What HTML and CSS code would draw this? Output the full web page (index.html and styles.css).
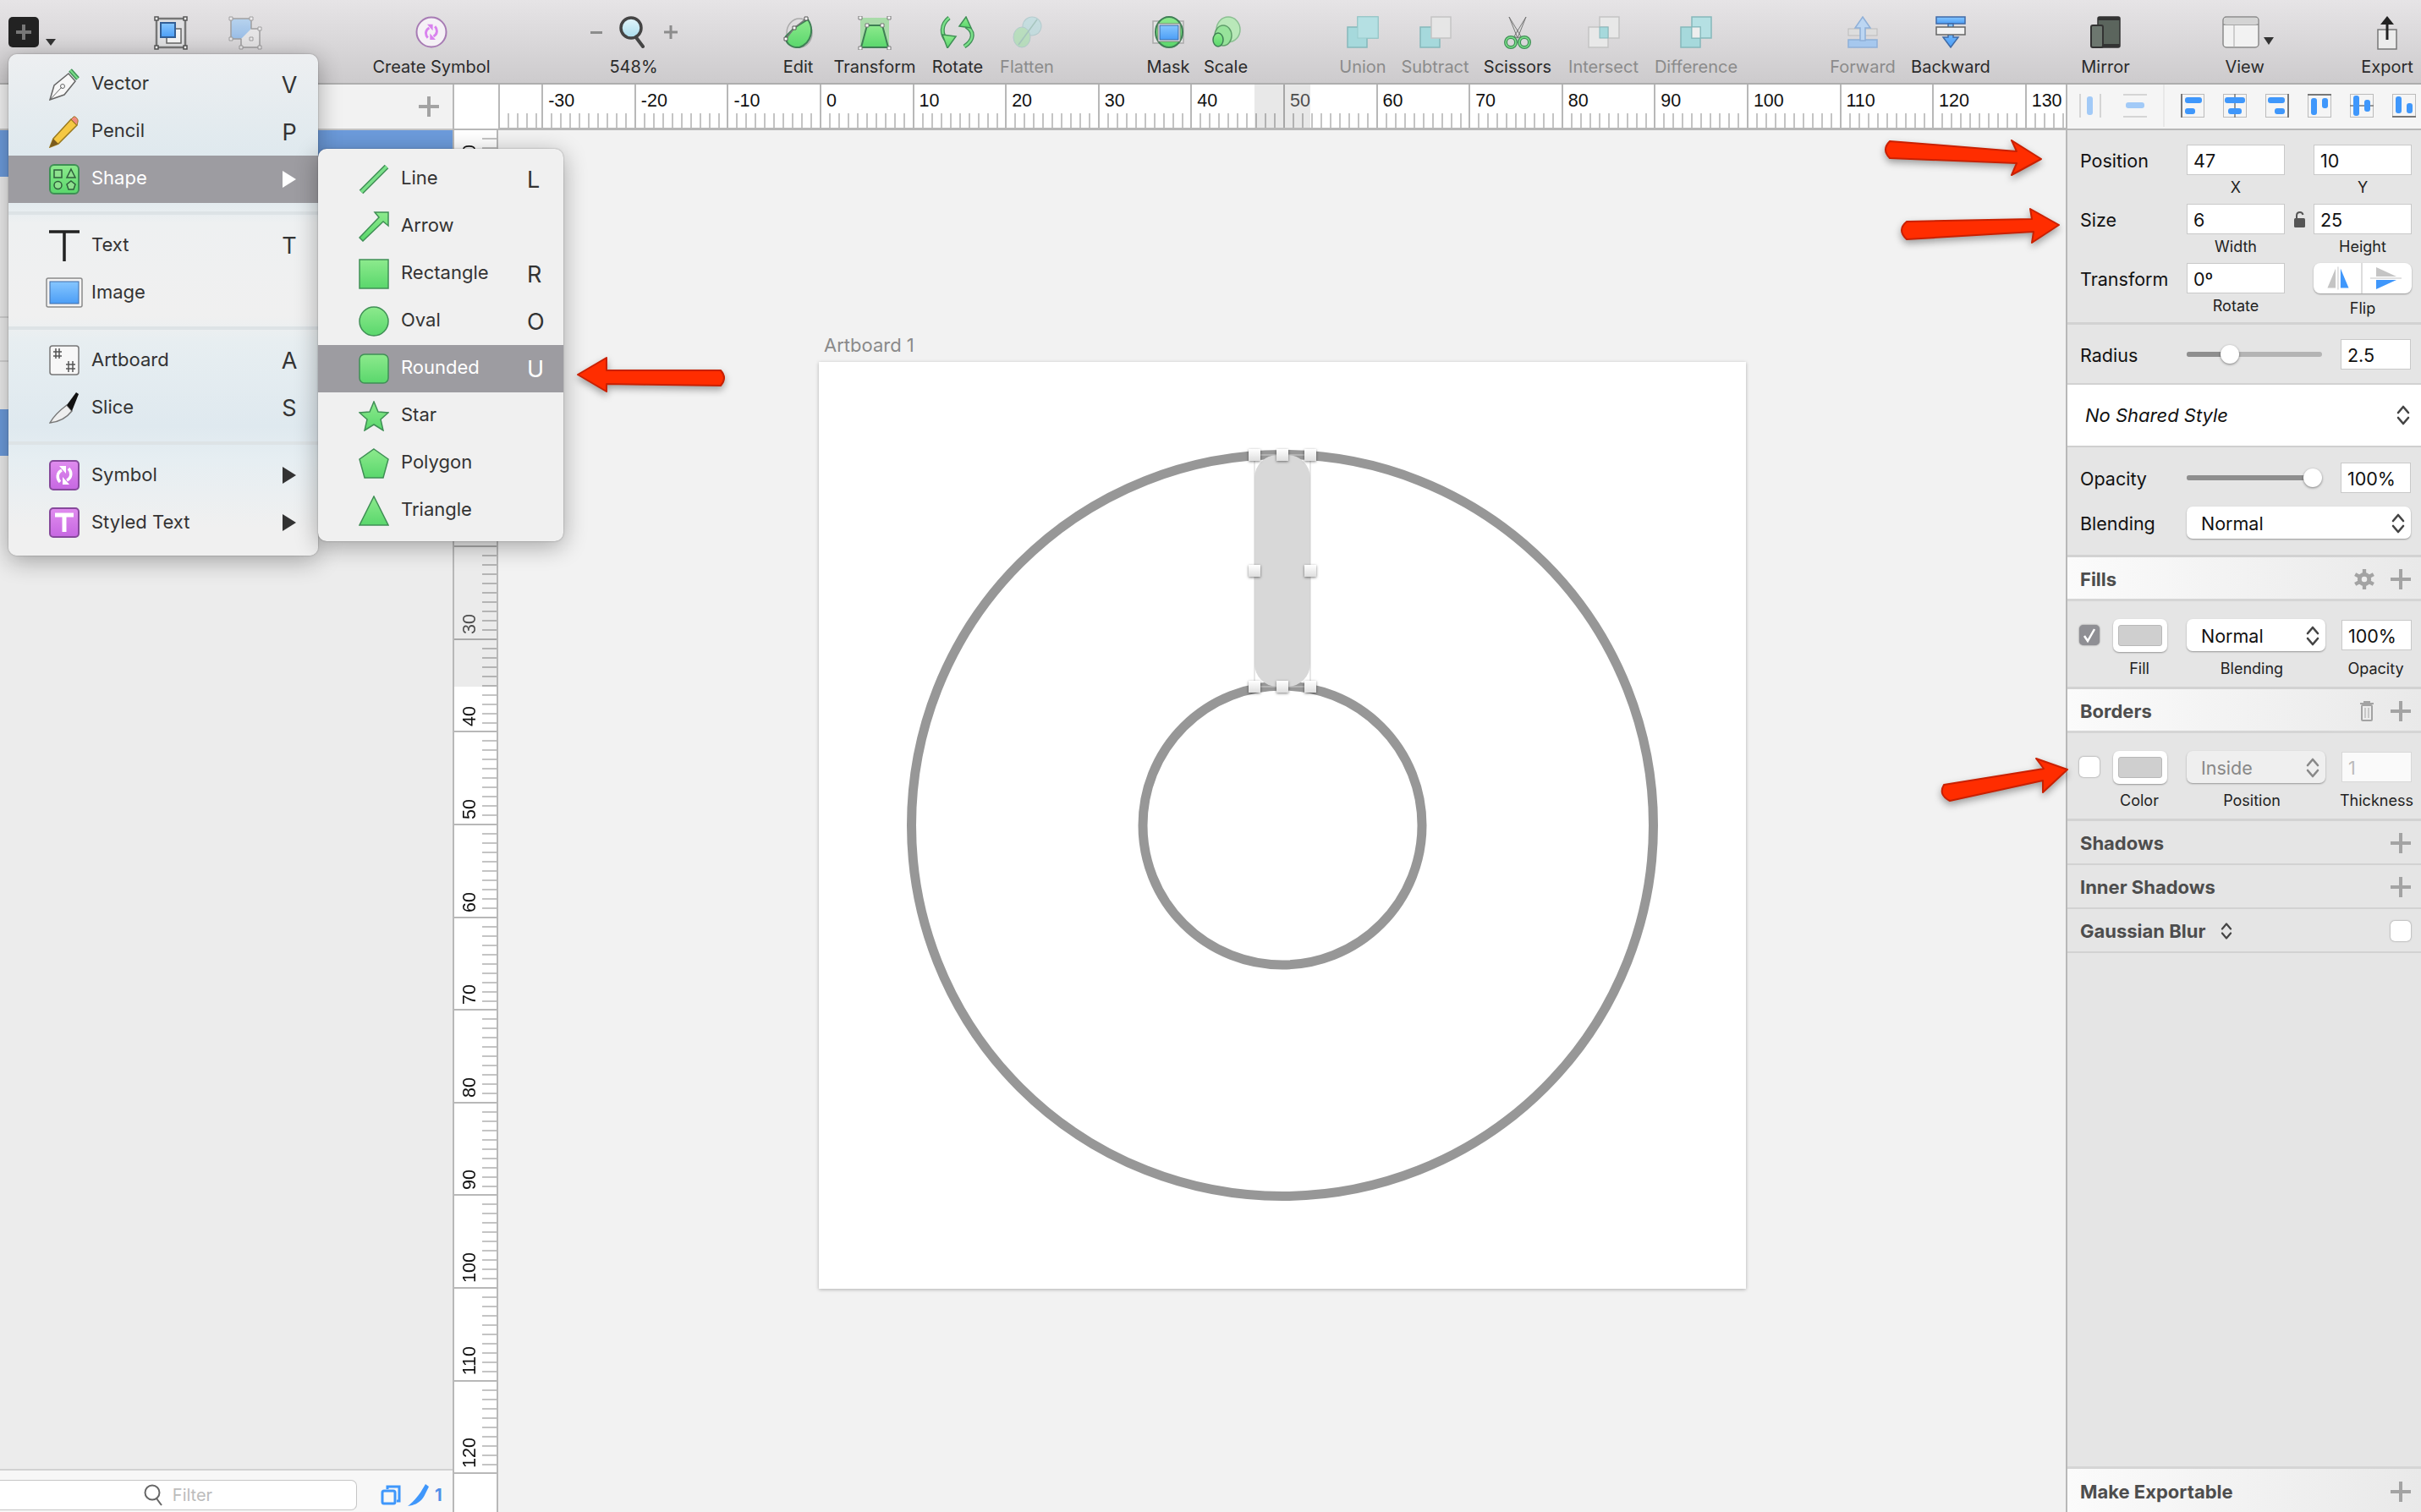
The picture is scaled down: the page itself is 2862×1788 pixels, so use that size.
FILE: index.html
```html
<!DOCTYPE html>
<html lang="en">
<head>
    <meta charset="UTF-8">
    <title>Sketch</title>
    <link rel="stylesheet" href="styles.css">
</head>
<body>
<svg class="defs" aria-hidden="true">
    <defs>
        <linearGradient id="gG" x1="0" y1="0" x2="0" y2="1"><stop offset="0" stop-color="#8dea8d"/><stop offset="1" stop-color="#5ad76c"/></linearGradient>
        <linearGradient id="gB" x1="0" y1="0" x2="0" y2="1"><stop offset="0" stop-color="#86c6ff"/><stop offset="1" stop-color="#4c9ef6"/></linearGradient>
        <linearGradient id="gP" x1="0" y1="0" x2="0" y2="1"><stop offset="0" stop-color="#e08cef"/><stop offset="1" stop-color="#c667e1"/></linearGradient>
        <linearGradient id="gL" x1="0" y1="0" x2="0" y2="1"><stop offset="0" stop-color="#e4f6fb"/><stop offset="1" stop-color="#a9dcec"/></linearGradient>
        <symbol id="updown" viewBox="0 0 16 26"><path d="M2 10 L8 3 L14 10 M2 16 L8 23 L14 16" fill="none" stroke="#444" stroke-width="2.6" stroke-linecap="round" stroke-linejoin="round"/></symbol>
        <symbol id="plus" viewBox="0 0 24 24"><path d="M12 0V24M0 12H24" stroke="#a3a3a3" stroke-width="4" stroke-linecap="round"/></symbol>
        <symbol id="tri" viewBox="0 0 16 20"><path d="M0 0L16 10L0 20Z"/></symbol>
        <symbol id="refresh" viewBox="0 0 24 24"><path d="M9 6C3 9 3 16 7 20M15 18C21 15 21 8 17 4" fill="none" stroke-width="3.500"/><path d="M6 1L14 1L14 10ZM18 23L10 23L10 14Z" stroke="none"/></symbol>
    </defs>
</svg>

<div class="app">
    <header class="toolbar">
        <div class="tool tool-insert">
            <div class="insert-btn"><svg width="20" height="20" viewBox="0 0 20 20"><path d="M10 1V19M1 10H19" stroke="#777" stroke-width="4"/></svg></div>
            <svg class="insert-caret" width="12" height="8" viewBox="0 0 12 8"><path d="M0 0H12L6 8Z" fill="#333"/></svg>
        </div>
        <div class="tool">
            <svg class="ico" width="40" height="40" viewBox="0 0 40 40"><rect x="3" y="3" width="34" height="34" fill="#e0e0e2" stroke="#777" stroke-width="2.500"/><rect x="15" y="15" width="17" height="17" fill="#f4f4f4" stroke="#666" stroke-width="1.500"/><rect x="8" y="8" width="17" height="17" fill="url(#gB)" stroke="#335f96" stroke-width="2"/><path d="M1 1h4v4h-4zM35 1h4v4h-4zM1 35h4v4h-4zM35 35h4v4h-4z" fill="#fff" stroke="#555" stroke-width="1.500"/></svg>
        </div>
        <div class="tool">
            <svg class="ico off" width="40" height="40" viewBox="0 0 40 40"><rect x="3" y="3" width="24" height="24" fill="url(#gB)" stroke="#555" stroke-width="1.500"/><path d="M27 15H37V37H15V27" fill="#f2f2f2" stroke="#555" stroke-width="1.500"/><path d="M1 1h4v4h-4zM25 1h4v4h-4zM1 25h4v4h-4zM25 25h4v4h-4zM35 13h4v4h-4zM13 35h4v4h-4zM35 35h4v4h-4z" fill="#fff" stroke="#555"/></svg>
        </div>
        <div class="tool">
            <svg class="ico" width="38" height="38" viewBox="0 0 38 38"><circle cx="19" cy="19" r="17.5" fill="#f5f1f6" stroke="#a77bb4" stroke-width="2"/><g transform="translate(9 9) scale(.83)" fill="#d982ee" stroke="#d982ee"><use href="#refresh" width="24" height="24"/></g></svg>
            <span class="tool-label">Create Symbol</span>
        </div>
        <div class="tool">
            <div class="zoom-row">
                <span class="zoom-minus"></span>
                <svg width="30" height="38" viewBox="0 0 30 38"><path d="M19 24L28 36" stroke="#444" stroke-width="4" stroke-linecap="round"/><circle cx="14" cy="14" r="12" fill="url(#gL)" stroke="#444" stroke-width="3.5"/></svg>
                <svg class="zoom-plus" width="16" height="16" viewBox="0 0 16 16"><path d="M8 0V16M0 8H16" stroke="#8c8c8c" stroke-width="3"/></svg>
            </div>
            <span class="tool-label">548%</span>
        </div>
        <div class="tool-gap"></div>
        <div class="tool">
            <svg class="ico" width="38" height="38" viewBox="0 0 38 38"><ellipse cx="20" cy="20" rx="15" ry="17" fill="none" stroke="#aaa" stroke-width="1.5"/><path d="M30 4 C38 16 34 32 20 37 C8 38 3 30 4 24 L14 14 Z" fill="url(#gG)" stroke="#3f7f55" stroke-width="2"/><path d="M4 27L14 14L28 3" fill="none" stroke="#777" stroke-width="1.5"/><path d="M2 25h4v4h-4zM12 12h4v4h-4zM26 1h4v4h-4z" fill="#fff" stroke="#555"/></svg>
            <span class="tool-label">Edit</span>
        </div>
        <div class="tool">
            <svg class="ico" width="40" height="40" viewBox="0 0 40 40"><rect x="3" y="2" width="34" height="36" fill="#a9dba9"/><path d="M11 11H29L36 37H4Z" fill="url(#gG)" stroke="#3f7f55" stroke-width="2"/><path d="M1 0h4v4h-4zM35 0h4v4h-4zM1 36h4v4h-4zM35 36h4v4h-4zM9 9h4v4h-4zM27 9h4v4h-4z" fill="#fff" stroke="#777"/></svg>
            <span class="tool-label">Transform</span>
        </div>
        <div class="tool">
            <svg class="ico" width="44" height="38" viewBox="0 0 44 38"><path d="M12 2 C2 10 2 22 10 30" fill="none" stroke="#3f8f55" stroke-width="5"/><path d="M12 2 C2 10 2 22 10 30" fill="none" stroke="#7be08a" stroke-width="2.5"/><path d="M4 22L20 24L10 38Z" fill="url(#gG)" stroke="#3f8f55" stroke-width="1.5"/><path d="M32 12 C42 18 42 28 30 36" fill="none" stroke="#3f8f55" stroke-width="5"/><path d="M32 12 C42 18 42 28 30 36" fill="none" stroke="#7be08a" stroke-width="2.5"/><path d="M24 12L38 14L32 1Z" fill="url(#gG)" stroke="#3f8f55" stroke-width="1.5"/></svg>
            <span class="tool-label">Rotate</span>
        </div>
        <div class="tool off-tool">
            <svg class="ico off" width="36" height="38" viewBox="0 0 36 38"><ellipse cx="24" cy="12" rx="11" ry="11" fill="#a6dde0" stroke="#7fb5b8" transform="rotate(25 24 12)"/><ellipse cx="12" cy="25" rx="10" ry="12" fill="#8fe29a" stroke="#7fb5b8"/><path d="M8 34L30 4" stroke="#6a9" stroke-width="1.5"/></svg>
            <span class="tool-label">Flatten</span>
        </div>
        <div class="tool-gap"></div>
        <div class="tool">
            <svg class="ico" width="40" height="38" viewBox="0 0 40 38"><rect x="2" y="6" width="36" height="26" fill="#e3e3e3" stroke="#aaa" stroke-width="1.5"/><ellipse cx="21" cy="19" rx="16" ry="18" fill="url(#gG)" stroke="#3f7f55" stroke-width="2"/><rect x="8" y="9" width="26" height="21" fill="#fff" stroke="#777"/><rect x="10" y="11" width="22" height="17" fill="url(#gB)" stroke="#36609a"/></svg>
            <span class="tool-label">Mask</span>
        </div>
        <div class="tool">
            <svg class="ico" width="36" height="38" viewBox="0 0 36 38"><ellipse cx="21" cy="16" rx="14" ry="15" fill="#b9e8b9" stroke="#8bbf92" stroke-width="1.5"/><ellipse cx="15" cy="23" rx="10" ry="12" fill="#97e39b" stroke="#5f9f6a" stroke-width="1.5"/><ellipse cx="9" cy="28" rx="6" ry="8" fill="url(#gG)" stroke="#3f7f55" stroke-width="1.5"/></svg>
            <span class="tool-label">Scale</span>
        </div>
        <div class="tool-gap"></div>
        <div class="tool off-tool">
            <svg class="ico" width="38" height="38" viewBox="0 0 38 38"><path d="M13 1H37V26H24V37H1V13H13Z" fill="#a6d9dc" stroke="#85b8bb" stroke-width="1.5"/><rect x="13" y="1" width="24" height="25" fill="#b5e0e3" stroke="#9cc" /></svg>
            <span class="tool-label">Union</span>
        </div>
        <div class="tool off-tool">
            <svg class="ico" width="38" height="38" viewBox="0 0 38 38"><rect x="1" y="13" width="23" height="24" fill="#a6d9dc" stroke="#85b8bb" stroke-width="1.5"/><rect x="14" y="1" width="23" height="25" fill="#e6e6e6" stroke="#c4c4c4" stroke-width="1.5"/></svg>
            <span class="tool-label">Subtract</span>
        </div>
        <div class="tool">
            <svg class="ico" width="32" height="40" viewBox="0 0 32 40"><path d="M6 1L20 24L16 26ZM26 1L12 24L16 26Z" fill="#ddd" stroke="#777"/><circle cx="8" cy="31" r="6" fill="none" stroke="#3f8f55" stroke-width="4"/><circle cx="24" cy="31" r="6" fill="none" stroke="#3f8f55" stroke-width="4"/><circle cx="8" cy="31" r="6" fill="none" stroke="#7be08a" stroke-width="1.5"/><circle cx="24" cy="31" r="6" fill="none" stroke="#7be08a" stroke-width="1.5"/></svg>
            <span class="tool-label">Scissors</span>
        </div>
        <div class="tool off-tool">
            <svg class="ico" width="38" height="38" viewBox="0 0 38 38"><rect x="14" y="1" width="23" height="25" fill="#e8e8e8" stroke="#c4c4c4" stroke-width="1.5"/><rect x="1" y="13" width="23" height="24" fill="#e8e8e8" stroke="#c4c4c4" stroke-width="1.5"/><rect x="14" y="13" width="10" height="13" fill="#a6d9dc" stroke="#85b8bb"/></svg>
            <span class="tool-label">Intersect</span>
        </div>
        <div class="tool off-tool">
            <svg class="ico" width="38" height="38" viewBox="0 0 38 38"><path d="M14 1H37V26H24V13H14Z" fill="#b5e0e3" stroke="#85b8bb" stroke-width="1.5"/><path d="M1 13H14V26H24V37H1Z" fill="#a6d9dc" stroke="#85b8bb" stroke-width="1.5"/><rect x="14" y="13" width="10" height="13" fill="#eee" stroke="#85b8bb"/></svg>
            <span class="tool-label">Difference</span>
        </div>
        <div class="tool-gap"></div>
        <div class="tool off-tool">
            <svg class="ico" width="36" height="38" viewBox="0 0 36 38"><rect x="1" y="15" width="34" height="8" fill="#ddd" stroke="#bbb"/><rect x="1" y="28" width="34" height="9" fill="#a6c8ee" stroke="#8fb0d8" stroke-width="1.5"/><path d="M18 1L27 14H21V29H15V14H9Z" fill="#bcd6f2" stroke="#8fb0d8" stroke-width="1.5"/></svg>
            <span class="tool-label">Forward</span>
        </div>
        <div class="tool">
            <svg class="ico" width="36" height="38" viewBox="0 0 36 38"><rect x="1" y="1" width="34" height="8" fill="url(#gB)" stroke="#3f6aa6" stroke-width="1.5"/><path d="M15 9H21V25H27L18 37L9 25H15Z" fill="url(#gB)" stroke="#3f6aa6" stroke-width="1.5"/><rect x="1" y="13" width="34" height="9" fill="#f2f2f2" stroke="#666" stroke-width="1.5"/></svg>
            <span class="tool-label">Backward</span>
        </div>
        <div class="tool-gap"></div>
        <div class="tool">
            <svg class="ico" width="36" height="38" viewBox="0 0 36 38"><rect x="9" y="1" width="26" height="36" rx="2" fill="#5b655d" stroke="#333" stroke-width="1.5"/><rect x="9" y="1" width="26" height="4" fill="#333"/><rect x="9" y="33" width="26" height="4" fill="#333"/><rect x="1" y="11" width="14" height="26" rx="2" fill="#6d776f" stroke="#333" stroke-width="2"/></svg>
            <span class="tool-label">Mirror</span>
        </div>
        <div class="tool-gap"></div>
        <div class="tool">
            <div class="view-row">
                <svg width="44" height="38" viewBox="0 0 44 38"><rect x="1" y="1" width="42" height="36" rx="4" fill="#f2f2f2" stroke="#8a8a8a" stroke-width="1.5"/><path d="M1 10H43" stroke="#8a8a8a" stroke-width="1.5"/><rect x="2" y="2" width="40" height="8" rx="3" fill="#d4d4d4"/><path d="M14 10V37" stroke="#aaa"/></svg>
                <svg class="view-caret" width="12" height="9" viewBox="0 0 12 9"><path d="M0 0H12L6 9Z" fill="#333"/></svg>
            </div>
            <span class="tool-label">View</span>
        </div>
        <div class="tool-gap"></div>
        <div class="tool">
            <svg class="ico" width="24" height="40" viewBox="0 0 24 40"><rect x="1" y="16" width="22" height="23" fill="#ececec" stroke="#777" stroke-width="1.5"/><path d="M12 28V4" stroke="#222" stroke-width="3"/><path d="M12 0L20 10H4Z" fill="#222"/></svg>
            <span class="tool-label">Export</span>
        </div>
    </header>

    <div class="workspace">
        <aside class="sidebar">
            <div class="side-head"><svg width="24" height="24"><use href="#plus"/></svg></div>
            <div class="layer layer-sel"></div>
            <div class="layer layer-tall"></div>
            <div class="layer layer-a"></div>
            <div class="layer layer-b"></div>
            <div class="layer layer-sel"></div>
            <div class="side-space"></div>
            <div class="side-foot">
                <div class="filter">
                    <svg width="22" height="26" viewBox="0 0 22 26"><circle cx="10" cy="10" r="8.5" fill="none" stroke="#666" stroke-width="2"/><path d="M15 17L21 25" stroke="#666" stroke-width="2"/></svg>
                    <span>Filter</span>
                </div>
                <svg class="pages-ico" width="24" height="24" viewBox="0 0 24 24"><path d="M8 5V2H22V19H19" fill="none" stroke="#3f97fb" stroke-width="3"/><rect x="2" y="7" width="15" height="15" rx="2" fill="none" stroke="#3f97fb" stroke-width="3"/></svg>
                <svg class="knife-ico" width="26" height="26" viewBox="0 0 26 26"><path d="M21 0L25 3L21 11C17 21 9 25 0 26C7 21 11 15 15 10Z" fill="#3f97fb"/></svg>
                <span class="foot-num">1</span>
            </div>
        </aside>

        <div class="ruler-corner"></div>

        <div class="hruler">
            <div class="hcell hcell-first"></div>
            <div class="hcell">-30</div>
            <div class="hcell">-20</div>
            <div class="hcell">-10</div>
            <div class="hcell">0</div>
            <div class="hcell">10</div>
            <div class="hcell">20</div>
            <div class="hcell">30</div>
            <div class="hcell">40</div>
            <div class="hcell dim">50</div>
            <div class="hcell">60</div>
            <div class="hcell">70</div>
            <div class="hcell">80</div>
            <div class="hcell">90</div>
            <div class="hcell">100</div>
            <div class="hcell">110</div>
            <div class="hcell">120</div>
            <div class="hcell">130</div>
            <div class="hband"></div>
        </div>

        <div class="vruler">
            <div class="vcell vcell-first"><span>-20</span></div>
            <div class="vcell"><span>-10</span></div>
            <div class="vcell"><span>0</span></div>
            <div class="vcell dim"><span>10</span></div>
            <div class="vcell dim"><span>20</span></div>
            <div class="vcell dim"><span>30</span></div>
            <div class="vcell"><span>40</span></div>
            <div class="vcell"><span>50</span></div>
            <div class="vcell"><span>60</span></div>
            <div class="vcell"><span>70</span></div>
            <div class="vcell"><span>80</span></div>
            <div class="vcell"><span>90</span></div>
            <div class="vcell"><span>100</span></div>
            <div class="vcell"><span>110</span></div>
            <div class="vcell"><span>120</span></div>
            <div class="vband"></div>
        </div>

        <main class="canvas">
            <div class="artboard-name">Artboard 1</div>
            <div class="artboard">
                <svg class="shapes" width="1096" height="1096" viewBox="0 0 1096 1096">
                    <circle cx="548" cy="548" r="438.500" fill="none" stroke="#979797" stroke-width="11"/>
                    <circle cx="548" cy="548" r="165" fill="none" stroke="#979797" stroke-width="11"/>
                    <rect x="515" y="110" width="66" height="274" rx="27" fill="#d8d8d8"/>
                    <rect x="515" y="110" width="66" height="274" fill="none" stroke="#cfcfcf"/>
                </svg>
                <div class="handle h-tl"></div>
                <div class="handle h-tc"></div>
                <div class="handle h-tr"></div>
                <div class="handle h-ml"></div>
                <div class="handle h-mr"></div>
                <div class="handle h-bl"></div>
                <div class="handle h-bc"></div>
                <div class="handle h-br"></div>
            </div>
        </main>

        <aside class="panel">
            <div class="align-bar">
                <svg class="al off" width="26" height="28" viewBox="0 0 26 28"><path d="M1 0V28M25 0V28" stroke="#999" stroke-width="1.5"/><rect x="9" y="3" width="7" height="22" rx="3" fill="#3f97fb"/></svg>
                <svg class="al al-b off" width="28" height="28" viewBox="0 0 28 28"><path d="M0 1H28M0 27H28" stroke="#999" stroke-width="1.5"/><rect x="3" y="10" width="22" height="7" rx="3" fill="#3f97fb"/></svg>
                <div class="al-sep"></div>
                <svg class="al" width="28" height="28" viewBox="0 0 28 28"><rect x=".5" y=".5" width="27" height="27" fill="none" stroke="#bbb"/><path d="M1 0V28" stroke="#777" stroke-width="2"/><rect x="5" y="4" width="20" height="7" rx="3" fill="#3f97fb"/><rect x="5" y="17" width="12" height="7" rx="3" fill="#3f97fb"/></svg>
                <svg class="al" width="28" height="28" viewBox="0 0 28 28"><rect x=".5" y=".5" width="27" height="27" fill="none" stroke="#bbb"/><path d="M14 0V28" stroke="#777" stroke-width="1.5"/><rect x="2" y="4" width="24" height="7" rx="3" fill="#3f97fb"/><rect x="6" y="17" width="16" height="7" rx="3" fill="#3f97fb"/></svg>
                <svg class="al" width="28" height="28" viewBox="0 0 28 28"><rect x=".5" y=".5" width="27" height="27" fill="none" stroke="#bbb"/><path d="M27 0V28" stroke="#777" stroke-width="2"/><rect x="3" y="4" width="20" height="7" rx="3" fill="#3f97fb"/><rect x="11" y="17" width="12" height="7" rx="3" fill="#3f97fb"/></svg>
                <svg class="al" width="28" height="28" viewBox="0 0 28 28"><rect x=".5" y=".5" width="27" height="27" fill="none" stroke="#bbb"/><path d="M0 1H28" stroke="#777" stroke-width="2"/><rect x="4" y="5" width="7" height="20" rx="3" fill="#3f97fb"/><rect x="17" y="5" width="7" height="12" rx="3" fill="#3f97fb"/></svg>
                <svg class="al" width="28" height="28" viewBox="0 0 28 28"><rect x=".5" y=".5" width="27" height="27" fill="none" stroke="#bbb"/><path d="M0 14H28" stroke="#777" stroke-width="1.5"/><rect x="4" y="2" width="7" height="24" rx="3" fill="#3f97fb"/><rect x="17" y="7" width="7" height="14" rx="3" fill="#3f97fb"/></svg>
                <svg class="al" width="28" height="28" viewBox="0 0 28 28"><rect x=".5" y=".5" width="27" height="27" fill="none" stroke="#bbb"/><path d="M0 27H28" stroke="#777" stroke-width="2"/><rect x="4" y="3" width="7" height="20" rx="3" fill="#3f97fb"/><rect x="17" y="11" width="7" height="12" rx="3" fill="#3f97fb"/></svg>
            </div>

            <section class="sec sec-props">
                <div class="prop-row">
                    <label class="lbl">Position</label>
                    <div class="field">47</div>
                    <div></div>
                    <div class="field">10</div>
                    <div></div>
                    <div class="sub">X</div>
                    <div></div>
                    <div class="sub">Y</div>
                </div>
                <div class="prop-row">
                    <label class="lbl">Size</label>
                    <div class="field">6</div>
                    <div class="lock"><svg width="13" height="19" viewBox="0 0 13 19"><path d="M3 8V5C3 2 5 1 7 1C9 1 10 2 10.500 4" fill="none" stroke="#555" stroke-width="2"/><rect x="0" y="8" width="13" height="11" rx="1.500" fill="#555"/></svg></div>
                    <div class="field">25</div>
                    <div></div>
                    <div class="sub">Width</div>
                    <div></div>
                    <div class="sub">Height</div>
                </div>
                <div class="prop-row">
                    <label class="lbl">Transform</label>
                    <div class="field">0º</div>
                    <div></div>
                    <div class="flip">
                        <svg width="58" height="36" viewBox="0 0 58 36"><path d="M27 6L17 30H27Z" fill="#c4c4c4"/><path d="M30 4V32" stroke="#c4c4c4"/><path d="M33 6L43 30H33Z" fill="#3f97fb"/></svg>
                        <svg width="57" height="36" viewBox="0 0 57 36"><path d="M16 5L40 16H16Z" fill="#c4c4c4"/><path d="M9 18H46" stroke="#c4c4c4"/><path d="M16 31L40 20H16Z" fill="#3f97fb"/></svg>
                    </div>
                    <div></div>
                    <div class="sub">Rotate</div>
                    <div></div>
                    <div class="sub sub-flip">Flip</div>
                </div>
            </section>

            <section class="sec sec-radius">
                <label class="lbl">Radius</label>
                <div class="slider"><span class="slider-fill radius-fill"></span><span class="thumb radius-thumb"></span></div>
                <div class="field field-sm">2.5</div>
            </section>

            <section class="sec sec-style">
                <em>No Shared Style</em>
                <svg width="16" height="26"><use href="#updown"/></svg>
            </section>

            <section class="sec sec-opacity">
                <div class="opacity-row">
                    <label class="lbl">Opacity</label>
                    <div class="slider"><span class="slider-fill opacity-fill"></span><span class="thumb opacity-thumb"></span></div>
                    <div class="field field-sm">100%</div>
                </div>
                <div class="opacity-row">
                    <label class="lbl">Blending</label>
                    <div class="select select-wide">Normal<svg width="16" height="26"><use href="#updown"/></svg></div>
                </div>
            </section>

            <div class="sec-head head-light">
                <span>Fills</span>
                <svg class="head-gear" width="24" height="26" viewBox="0 0 22 24"><g stroke="#a3a3a3" stroke-width="4"><path d="M11 1V23M1 6.500L21 17.500M1 17.500L21 6.500"/></g><circle cx="11" cy="12" r="7.500" fill="#a3a3a3"/><circle cx="11" cy="12" r="3" fill="#eee"/></svg>
                <svg width="24" height="24"><use href="#plus"/></svg>
            </div>
            <section class="sec sec-fill">
                <div class="check on"><svg width="16" height="18" viewBox="0 0 16 18"><path d="M2 10L6 16L14 2" fill="none" stroke="#fff" stroke-width="2.500"/></svg></div>
                <div class="swatch"><span></span></div>
                <div class="select">Normal<svg width="16" height="26"><use href="#updown"/></svg></div>
                <div class="field">100%</div>
                <div></div>
                <div class="sub">Fill</div>
                <div class="sub">Blending</div>
                <div class="sub">Opacity</div>
            </section>

            <div class="sec-head head-light">
                <span>Borders</span>
                <svg class="head-trash" width="18" height="24" viewBox="0 0 18 24"><path d="M1 3H17M6 3V1H12V3" fill="none" stroke="#a3a3a3" stroke-width="2"/><rect x="3" y="5" width="12" height="18" rx="1" fill="none" stroke="#a3a3a3" stroke-width="2"/><path d="M7 8V20M11 8V20" stroke="#a3a3a3"/></svg>
                <svg width="24" height="24"><use href="#plus"/></svg>
            </div>
            <section class="sec sec-fill">
                <div class="check"></div>
                <div class="swatch"><span></span></div>
                <div class="select select-off">Inside<svg width="16" height="26"><use href="#updown"/></svg></div>
                <div class="field field-off">1</div>
                <div></div>
                <div class="sub">Color</div>
                <div class="sub">Position</div>
                <div class="sub">Thickness</div>
            </section>

            <div class="sec-head"><span>Shadows</span><svg width="24" height="24"><use href="#plus"/></svg></div>
            <div class="sec-head"><span>Inner Shadows</span><svg width="24" height="24"><use href="#plus"/></svg></div>
            <div class="sec-head head-blur">
                <span>Gaussian Blur</span>
                <svg class="blur-arrows" width="14" height="22"><use href="#updown"/></svg>
                <div class="check"></div>
            </div>
            <div class="panel-space"></div>
            <div class="sec-head head-light head-export"><span>Make Exportable</span><svg width="24" height="24"><use href="#plus"/></svg></div>
        </aside>
    </div>

    <!-- insert menu -->
    <nav class="menu menu-main">
        <div class="item">
            <svg class="mi" width="36" height="38" viewBox="0 0 36 38"><path d="M1 37L6 20L23 6L31 15L18 31Z" fill="#f7f7f7" stroke="#666" stroke-width="1.500"/><path d="M25 2L34 12" stroke="#3f8f55" stroke-width="5"/><path d="M25 2L34 12" stroke="#7be08a" stroke-width="2"/><path d="M1 37L15 22" stroke="#666"/><circle cx="16" cy="21" r="2.500" fill="none" stroke="#666"/></svg>
            <span class="item-text">Vector</span><span class="key">V</span>
        </div>
        <div class="item">
            <svg class="mi" width="36" height="38" viewBox="0 0 36 38"><path d="M1 37L5 27L26 4L33 11L11 33Z" fill="#f5c842" stroke="#9a7a20" stroke-width="1.500"/><path d="M1 37L5 27L11 33Z" fill="#7a5b1e"/><path d="M26 4L29 1C31 0 35 4 34 7L33 11Z" fill="#ef8a80" stroke="#9a7a20"/></svg>
            <span class="item-text">Pencil</span><span class="key">P</span>
        </div>
        <div class="item active">
            <svg class="mi" width="36" height="36" viewBox="0 0 36 36"><rect x="1" y="1" width="34" height="34" rx="5" fill="url(#gG)" stroke="#3f8f55" stroke-width="2"/><rect x="6" y="7" width="9" height="9" fill="#8ee08e" stroke="#2f5f3c" stroke-width="1.500"/><path d="M26 6L31 16H21Z" fill="#8ee08e" stroke="#2f5f3c" stroke-width="1.500"/><circle cx="10.500" cy="25" r="4.500" fill="#8ee08e" stroke="#2f5f3c" stroke-width="1.500"/><path d="M26 20L31 24L29 30H23L21 24Z" fill="#8ee08e" stroke="#2f5f3c" stroke-width="1.500"/></svg>
            <span class="item-text">Shape</span><svg class="sub-arrow" width="18" height="20"><use href="#tri"/></svg>
        </div>
        <div class="menu-sep sep-first"></div>
        <div class="item low">
            <svg class="mi" width="36" height="38" viewBox="0 0 36 38"><path d="M0 3H36M18 3V38" stroke="#222" stroke-width="3.500"/></svg>
            <span class="item-text">Text</span><span class="key">T</span>
        </div>
        <div class="item low">
            <svg class="mi mi-wide" width="44" height="36" viewBox="0 0 44 36"><rect x="1" y="1" width="42" height="34" rx="2" fill="#f3f3f3" stroke="#8a8a8a" stroke-width="1.500"/><rect x="5" y="5" width="34" height="26" fill="url(#gB)" stroke="#3f6aa6"/></svg>
            <span class="item-text">Image</span>
        </div>
        <div class="menu-sep"></div>
        <div class="item low">
            <svg class="mi" width="36" height="36" viewBox="0 0 36 36"><rect x="1" y="1" width="34" height="34" rx="3" fill="#f7f7f7" stroke="#777" stroke-width="1.500"/><path d="M5 8H15M5 13H15M8 4V16M12 4V16M20 23H31M20 28H31M23 19V32M28 19V32" stroke="#555" stroke-width="1.500"/></svg>
            <span class="item-text">Artboard</span><span class="key">A</span>
        </div>
        <div class="item low">
            <svg class="mi" width="36" height="38" viewBox="0 0 36 38"><path d="M1 37C6 28 13 22 21 16L27 23C20 32 11 36 1 37Z" fill="#eee" stroke="#777" stroke-width="1.500"/><path d="M21 16L32 1L35 3L27 23Z" fill="#111"/></svg>
            <span class="item-text">Slice</span><span class="key">S</span>
        </div>
        <div class="menu-sep"></div>
        <div class="item low">
            <svg class="mi" width="36" height="36" viewBox="0 0 36 36"><rect x="1" y="1" width="34" height="34" rx="4" fill="url(#gP)" stroke="#86499b" stroke-width="2"/><g transform="translate(6 6)" fill="#fff" stroke="#fff"><use href="#refresh" width="24" height="24"/></g></svg>
            <span class="item-text">Symbol</span><svg class="sub-arrow" width="18" height="20"><use href="#tri"/></svg>
        </div>
        <div class="item low">
            <svg class="mi" width="36" height="36" viewBox="0 0 36 36"><rect x="1" y="1" width="34" height="34" rx="4" fill="url(#gP)" stroke="#86499b" stroke-width="2"/><path d="M7 9H29M18 9V29" stroke="#fff" stroke-width="5"/></svg>
            <span class="item-text">Styled Text</span><svg class="sub-arrow" width="18" height="20"><use href="#tri"/></svg>
        </div>
    </nav>

    <!-- shape submenu -->
    <nav class="menu menu-sub">
        <div class="item">
            <svg class="mi" width="36" height="36" viewBox="0 0 36 36"><path d="M3 33L33 3" stroke="#3f8f55" stroke-width="6.500"/><path d="M3 33L33 3" stroke="#7be08a" stroke-width="3.500"/></svg>
            <span class="item-text">Line</span><span class="key">L</span>
        </div>
        <div class="item">
            <svg class="mi" width="36" height="36" viewBox="0 0 36 36"><path d="M35 1V17L29 12L5 35L1 31L24 7L19 1Z" fill="url(#gG)" stroke="#3f8f55" stroke-width="1.500"/></svg>
            <span class="item-text">Arrow</span>
        </div>
        <div class="item">
            <svg class="mi" width="36" height="36" viewBox="0 0 36 36"><rect x="1" y="1" width="34" height="34" fill="url(#gG)" stroke="#3f8f55" stroke-width="1.500"/></svg>
            <span class="item-text">Rectangle</span><span class="key">R</span>
        </div>
        <div class="item">
            <svg class="mi" width="36" height="36" viewBox="0 0 36 36"><circle cx="18" cy="18" r="17" fill="url(#gG)" stroke="#3f8f55" stroke-width="1.500"/></svg>
            <span class="item-text">Oval</span><span class="key">O</span>
        </div>
        <div class="item active">
            <svg class="mi" width="36" height="36" viewBox="0 0 36 36"><rect x="1" y="1" width="34" height="34" rx="6" fill="url(#gG)" stroke="#3f8f55" stroke-width="1.500"/></svg>
            <span class="item-text">Rounded</span><span class="key">U</span>
        </div>
        <div class="item">
            <svg class="mi" width="36" height="36" viewBox="0 0 36 36"><path d="M18 1L23 13L35 14L26 22L29 35L18 28L7 35L10 22L1 14L13 13Z" fill="url(#gG)" stroke="#3f8f55" stroke-width="1.500"/></svg>
            <span class="item-text">Star</span>
        </div>
        <div class="item">
            <svg class="mi" width="36" height="36" viewBox="0 0 36 36"><path d="M18 1L35 13L29 35H7L1 13Z" fill="url(#gG)" stroke="#3f8f55" stroke-width="1.500"/></svg>
            <span class="item-text">Polygon</span>
        </div>
        <div class="item">
            <svg class="mi" width="36" height="36" viewBox="0 0 36 36"><path d="M18 1L35 35H1Z" fill="url(#gG)" stroke="#3f8f55" stroke-width="1.500"/></svg>
            <span class="item-text">Triangle</span>
        </div>
    </nav>

    <!-- red annotation arrows drawn on top of the screenshot -->
    <svg class="arrows" width="2862" height="1788" viewBox="0 0 2862 1788">
        <g fill="#ff2d00" stroke="#c92000" stroke-width="2" stroke-linejoin="round">
            <path d="M2234 167L2384 179L2378 166L2413 188L2378 207L2384 193L2234 187Q2224 177 2234 167Z"/>
            <path d="M2254 262L2402 259L2400 247L2434 266L2402 287L2404 274L2254 283Q2242 272 2254 262Z"/>
            <path d="M2298 928L2416 909L2407 897L2444 910L2415 937L2415 923L2305 947Q2291 940 2298 928Z"/>
            <path d="M852 438L717 438L717 423L683 443L717 463L717 454L852 456Q860 447 852 438Z"/>
        </g>
    </svg>
</div>
</body>
</html>
```

FILE: styles.css
```css
* { box-sizing: border-box; }

html, body {
    margin: 0;
    padding: 0;
}

body {
    width: 2862px;
    height: 1788px;
    overflow: hidden;
    font-family: Inter, "Liberation Sans", sans-serif;
    color: #222;
}

.defs {
    position: absolute;
    width: 0;
    height: 0;
}

.app {
    position: relative;
    width: 2862px;
    height: 1788px;
    display: flex;
    flex-direction: column;
    overflow: hidden;
}

/* toolbar */
.toolbar {
    flex: none;
    height: 100px;
    display: grid;
    grid-template-columns: 162px 80px 96px 344px 134px 89.5px 76px 105px 91px 73px 94.5px 72px 64px 92px 76px 95px 100px 103px 116px 87px 104px 104px 81px 100px 64.6px 100px 78.4px 80px;
    padding-top: 19px;
    background: linear-gradient(#e6e4e6, #cdcbcd);
    border-bottom: 2px solid #aeaeae;
}

.tool {
    display: flex;
    flex-direction: column;
    align-items: center;
    position: relative;
    height: 79px;
}

.ico { flex: none; }
.off { opacity: .45; }

.tool-label {
    position: absolute;
    top: 48px;
    white-space: nowrap;
    font-size: 20px;
    line-height: 24px;
    color: #2b2b2b;
}

.off-tool .tool-label { color: #8b8b8b; }

.tool-insert {
    flex-direction: row;
    align-items: flex-start;
    padding-left: 10px;
}

.insert-btn {
    width: 36px;
    height: 36px;
    margin-top: 1px;
    border-radius: 5px;
    background: #222;
    display: flex;
    align-items: center;
    justify-content: center;
}

.insert-caret {
    margin: 27px 0 0 8px;
}

.zoom-row {
    display: flex;
    align-items: center;
    gap: 20px;
    height: 38px;
}

.zoom-minus {
    width: 14px;
    height: 3px;
    background: #8c8c8c;
}

.zoom-plus { margin-left: 3px; }

.view-row {
    display: flex;
    align-items: flex-end;
    gap: 5px;
    margin-left: 7px;
}

.view-caret { margin-bottom: 4px; }

/* main area */
.workspace {
    flex: 1;
    display: grid;
    grid-template-columns: 535px 54px 1853px 420px;
    grid-template-rows: 54px 1634px;
}

.sidebar {
    grid-row: 1 / 3;
    display: flex;
    flex-direction: column;
    background: #ececec;
}

.side-head {
    flex: none;
    height: 54px;
    display: flex;
    align-items: center;
    justify-content: flex-end;
    padding-right: 16px;
    background: #f2f2f2;
    border-bottom: 2px solid #c4c4c4;
}

.layer { flex: none; }
.layer-sel { height: 55px; background: #6c9bdb; }
.layer-tall { height: 167px; border-bottom: 2px solid #d2d2d2; }
.layer-a { height: 52px; border-bottom: 2px solid #d2d2d2; }
.layer-b { height: 56px; }
.side-space { flex: 1; }

.side-foot {
    flex: none;
    height: 51px;
    display: flex;
    align-items: center;
    background: #f7f7f7;
    border-top: 2px solid #d2d2d2;
    padding-top: 8px;
}

.filter {
    width: 422px;
    height: 36px;
    display: flex;
    align-items: center;
    justify-content: center;
    gap: 12px;
    background: #fff;
    border: 1px solid #c6c6c6;
    border-left: 0;
    border-radius: 0 7px 7px 0;
    font-size: 20px;
    color: #bcbcbc;
}

.pages-ico { margin-left: 28px; }
.knife-ico { margin-left: 8px; }

.foot-num {
    margin-left: 6px;
    font-size: 20px;
    font-weight: 700;
    color: #4f8fe8;
}

/* rulers */
.ruler-corner {
    background: #fff;
    border-left: 2px solid #b8b8b8;
    border-bottom: 2px solid #b8b8b8;
}

.hruler {
    position: relative;
    display: flex;
    background: #fff;
    border-bottom: 3px solid #b8b8b8;
    overflow: hidden;
    font-family: "Liberation Sans", sans-serif;
    font-size: 21.5px;
    color: #111;
}

.hcell {
    flex: none;
    width: 109.6px;
    height: 100%;
    padding: 7px 0 0 6px;
    line-height: 24px;
    border-left: 2px solid #b8b8b8;
    background: repeating-linear-gradient(90deg, transparent 0 9px, #c4c4c4 9px 11px) bottom left / 100% 17px no-repeat;
}

.hcell-first { width: 51.2px; }

.hband {
    position: absolute;
    top: 0;
    left: 894px;
    width: 66px;
    height: 100%;
    background: rgba(0, 0, 0, .09);
}

.dim { color: #555; }

.vruler {
    position: relative;
    display: flex;
    flex-direction: column;
    background: #fff;
    border-left: 2px solid #b8b8b8;
    border-right: 2px solid #b8b8b8;
    overflow: hidden;
    font-family: "Liberation Sans", sans-serif;
    font-size: 21.5px;
    color: #111;
}

.vcell {
    flex: none;
    height: 109.6px;
    display: flex;
    align-items: flex-end;
    padding: 0 0 5px 6px;
    border-bottom: 2px solid #b8b8b8;
    background: repeating-linear-gradient(180deg, transparent 0 9px, #c4c4c4 9px 11px) top right / 17px 100% no-repeat;
}

.vcell span {
    writing-mode: vertical-rl;
    transform: rotate(180deg);
    line-height: 24px;
}

.vcell-first { height: 54.8px; }

.vband {
    position: absolute;
    top: 384px;
    left: 0;
    width: 100%;
    height: 274px;
    background: rgba(0, 0, 0, .08);
}

/* canvas */
.canvas {
    position: relative;
    background: #f2f2f2;
}

.artboard-name {
    position: absolute;
    left: 385px;
    top: 241px;
    font-size: 22px;
    line-height: 26px;
    color: #8a8a8a;
}

.artboard {
    position: absolute;
    left: 379px;
    top: 274px;
    width: 1096px;
    height: 1096px;
    background: #fff;
    box-shadow: 0 1px 4px rgba(0, 0, 0, .28);
}

.shapes { display: block; }

.handle {
    position: absolute;
    width: 14px;
    height: 14px;
    background: linear-gradient(#fff, #dedede);
    box-shadow: 0 1px 3px rgba(0, 0, 0, .5);
}

.h-tl { left: 508px; top: 103px; }
.h-tc { left: 541px; top: 103px; }
.h-tr { left: 574px; top: 103px; }
.h-ml { left: 508px; top: 240px; }
.h-mr { left: 574px; top: 240px; }
.h-bl { left: 508px; top: 377px; }
.h-bc { left: 541px; top: 377px; }
.h-br { left: 574px; top: 377px; }

/* inspector */
.panel {
    grid-column: 4;
    grid-row: 1 / 3;
    display: flex;
    flex-direction: column;
    background: #e5e5e5;
    border-left: 2px solid #b8b8b8;
    font-size: 21.5px;
    color: #111;
}

.align-bar {
    flex: none;
    height: 54px;
    display: flex;
    align-items: center;
    gap: 22px;
    padding: 0 0 2px 14px;
    background: #f5f5f5;
    border-bottom: 2px solid #b8b8b8;
}

.al { flex: none; }
.al-b { margin-left: 4px; }

.al-sep {
    width: 2px;
    height: 100%;
    margin: 0 -3px;
    background: #e8e8e8;
}

.sec { flex: none; }

.lbl {
    padding-top: 2px;
    white-space: nowrap;
}

.field {
    height: 36px;
    padding-left: 7px;
    line-height: 36px;
    background: #fff;
    border: 1px solid #c9c9c9;
}

.sub {
    padding-top: 1px;
    font-size: 18px;
    line-height: 28px;
    text-align: center;
    white-space: nowrap;
    color: #222;
}

.sub-flip { margin-top: 3px; }

.sec-props {
    height: 230px;
    padding: 17px 0 0 15px;
    border-bottom: 3px solid #d2d2d2;
}

.prop-row {
    display: grid;
    grid-template-columns: 126px 116px 34px 116px;
    grid-template-rows: 36px 34px;
    align-items: center;
}

.prop-row .sub { align-self: start; }

.lock {
    display: flex;
    justify-content: center;
}

.flip {
    height: 36px;
    display: flex;
    background: #fff;
    border-radius: 8px;
    box-shadow: 0 1px 2px rgba(0, 0, 0, .35);
}

.flip svg:first-child { border-right: 2px solid #ddd; }

.sec-radius {
    height: 71px;
    display: flex;
    align-items: center;
    padding: 0 0 0 15px;
    border-bottom: 2px solid #d2d2d2;
}

.sec-radius .lbl,
.opacity-row .lbl { width: 126px; }

.slider {
    position: relative;
    width: 160px;
    height: 6px;
    border-radius: 3px;
    background: #b4b4b4;
}

.slider-fill {
    position: absolute;
    left: 0;
    top: 0;
    height: 6px;
    border-radius: 3px;
    background: #8e8e8e;
}

.radius-fill { width: 51px; }
.opacity-fill { width: 149px; }

.thumb {
    position: absolute;
    top: -8px;
    width: 22px;
    height: 22px;
    border-radius: 50%;
    background: #fff;
    box-shadow: 0 1px 3px rgba(0, 0, 0, .45);
}

.radius-thumb { left: 40px; }
.opacity-thumb { left: 138px; }

.field-sm {
    width: 83px;
    margin-left: 22px;
}

.sec-style {
    height: 74px;
    display: flex;
    align-items: center;
    justify-content: space-between;
    padding: 0 13px 0 21px;
    background: #fff;
    border-bottom: 2px solid #cfcfcf;
    font-size: 22px;
}

.sec-opacity {
    height: 130px;
    padding: 18px 0 0 15px;
    border-bottom: 3px solid #d2d2d2;
}

.opacity-row {
    display: flex;
    align-items: center;
    height: 36px;
    margin-bottom: 17px;
}

.select {
    height: 38px;
    display: flex;
    align-items: center;
    justify-content: space-between;
    padding: 2px 7px 0 17px;
    background: #fff;
    border-radius: 7px;
    box-shadow: 0 1px 2px rgba(0, 0, 0, .35);
}

.select-wide { width: 265px; }
.select-off { background: #efefef; color: #888; }
.select-off svg { opacity: .6; }

.sec-head {
    flex: none;
    height: 52px;
    display: flex;
    align-items: center;
    gap: 16px;
    padding: 2px 12px 0 15px;
    border-bottom: 2px solid #d2d2d2;
    background: #e5e5e5;
}

.sec-head span {
    margin-right: auto;
    font-size: 22px;
    font-weight: 700;
    color: #4d4d4d;
}

.head-light {
    background: linear-gradient(90deg, #fbfbfb, #e9e9e9);
    border-bottom: 3px solid #d5d5d5;
}

.head-gear, .head-trash { margin-right: 3px; }

.head-blur span { margin-right: 0; }
.head-blur .blur-arrows { margin: 0 auto 0 2px; }

.sec-fill {
    height: 104px;
    display: grid;
    grid-template-columns: 24px 80px 187px 102px;
    grid-template-rows: 40px 38px;
    padding: 20px 0 0 14px;
    align-items: center;
    border-bottom: 3px solid #d2d2d2;
}

.sec-fill .swatch { margin-left: 16px; }
.sec-fill .select { margin-left: 23px; }
.sec-fill .field { margin-left: 19px; }
.sec-fill .sub:nth-child(6) { margin-left: 14px; }
.sec-fill .sub:nth-child(7) { margin: 0 10px 0 23px; }
.sec-fill .sub:nth-child(8) { margin-left: 17px; }

.check {
    width: 24px;
    height: 24px;
    flex: none;
    border-radius: 5px;
    background: #fff;
    box-shadow: 0 0 2px rgba(0, 0, 0, .5);
    display: flex;
    align-items: center;
    justify-content: center;
}

.check.on { background: #8f8f94; }

.swatch {
    width: 64px;
    height: 39px;
    display: flex;
    align-items: center;
    justify-content: center;
    background: #fff;
    border-radius: 7px;
    box-shadow: 0 1px 2px rgba(0, 0, 0, .35);
}

.swatch span {
    width: 52px;
    height: 25px;
    border-radius: 3px;
    background: #cfcfcf;
    border: 1px solid #b8b8b8;
}

.field-off { color: #bbb; border-color: #d8d8d8; background: #fafafa; }

.panel-space { flex: 1; }

.head-export {
    height: 54px;
    border-bottom: 0;
    border-top: 3px solid #d5d5d5;
}

/* menus lie over everything else */
.menu {
    position: absolute;
    border-radius: 10px;
    box-shadow: 0 6px 28px rgba(0, 0, 0, .32), 0 0 2px rgba(0, 0, 0, .35);
    font-size: 22px;
    color: #333;
    overflow: hidden;
}

.menu-main {
    left: 10px;
    top: 64px;
    width: 366px;
    height: 593px;
    padding-top: 8px;
    background: linear-gradient(#edeff1 0, #dfe9ee 120px, #e3ebef 176px, #eef0f1 200px, #f0f0f0 310px, #e7eef1 340px, #dfe9ef 440px, #e6eef2 480px, #f0f0f0 560px);
}

.menu-sub {
    left: 376px;
    top: 176px;
    width: 290px;
    height: 464px;
    padding-top: 8px;
    background: #f0f0f0;
}

.item {
    height: 56px;
    display: flex;
    align-items: center;
    padding: 0 18px 0 48px;
}

.menu-sub .item { padding: 0 23px 0 48px; }

.item.active {
    background: #9d9ca1;
    color: #fff;
}

.mi { flex: none; }
.mi-wide { margin: 0 -4px; }

.item-text {
    margin: 0 auto 0 14px;
    padding-bottom: 4px;
    white-space: nowrap;
}

.low .item-text { padding-bottom: 2px; }

.key {
    width: 32px;
    font-size: 27px;
    text-align: center;
    color: #333;
}

.menu-sub .key {
    width: 20px;
    overflow: visible;
    text-align: left;
}

.active .key { color: #fff; }

.sub-arrow {
    margin-right: 7px;
    fill: #333;
}

.active .sub-arrow { fill: #fff; }

.menu-sep {
    height: 4px;
    margin: 12px 0 8px;
    background: #dde3e6;
}

.sep-first { margin-top: 10px; }

.arrows {
    position: absolute;
    left: 0;
    top: 0;
    pointer-events: none;
    filter: drop-shadow(0 4px 4px rgba(0, 0, 0, .35));
}
```
